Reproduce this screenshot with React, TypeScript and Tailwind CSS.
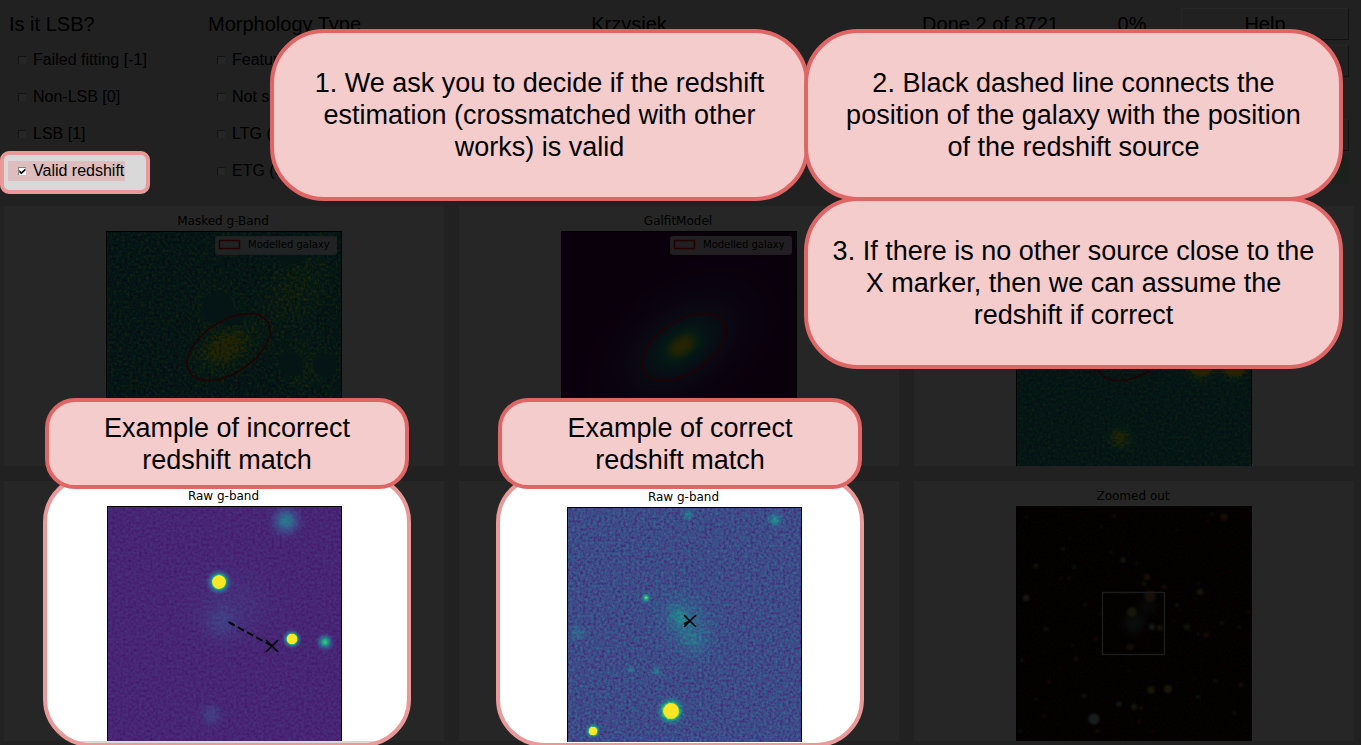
import type { ReactNode } from "react";

type Spot = { x: number; y: number; r: number; ry?: number; rot?: number; o?: number; star?: boolean };

const VIRIDIS_R = "0.267 0.283 0.254 0.207 0.164 0.128 0.135 0.267 0.478 0.741 0.993";
const VIRIDIS_G = "0.005 0.141 0.265 0.372 0.471 0.567 0.659 0.749 0.821 0.873 0.906";
const VIRIDIS_B = "0.329 0.458 0.530 0.553 0.558 0.551 0.518 0.441 0.318 0.150 0.144";

/* Greyscale intensity + sensor noise, mapped through the viridis colour scale. */
function SkyFilter({ id, noise, seed }: { id: string; noise: number; seed: number }) {
  return (
    <filter id={id} filterUnits="userSpaceOnUse" x="0" y="0" width="236" height="236" colorInterpolationFilters="sRGB">
      <feTurbulence type="fractalNoise" baseFrequency="0.37" numOctaves="2" seed={seed} result="t" />
      <feColorMatrix in="t" type="matrix" values="1 0 0 0 0  1 0 0 0 0  1 0 0 0 0  0 0 0 0 1" result="n" />
      <feComposite in="SourceGraphic" in2="n" operator="arithmetic" k1={0} k2={1} k3={noise} k4={-noise / 2} />
      <feComponentTransfer>
        <feFuncR type="table" tableValues={VIRIDIS_R} />
        <feFuncG type="table" tableValues={VIRIDIS_G} />
        <feFuncB type="table" tableValues={VIRIDIS_B} />
      </feComponentTransfer>
    </filter>
  );
}

function Sky({
  id,
  base,
  noise,
  seed,
  spots,
  wide,
  children,
}: {
  id: string;
  base: string;
  noise: number;
  seed: number;
  spots: Spot[];
  wide?: boolean;
  children?: ReactNode;
}) {
  const w = wide ? 236 : 235;
  return (
    <svg width={w} height="235" viewBox={`0 0 ${w} 235`} className="block shrink-0" aria-hidden="true">
      <defs>
        <SkyFilter id={`${id}-f`} noise={noise} seed={seed} />
        <radialGradient id={`${id}-soft`}>
          <stop offset="0" stopColor="#fff" />
          <stop offset="0.25" stopColor="#fff" stopOpacity="0.78" />
          <stop offset="0.5" stopColor="#fff" stopOpacity="0.36" />
          <stop offset="0.75" stopColor="#fff" stopOpacity="0.1" />
          <stop offset="1" stopColor="#fff" stopOpacity="0" />
        </radialGradient>
        <radialGradient id={`${id}-star`}>
          <stop offset="0.48" stopColor="#fff" />
          <stop offset="0.56" stopColor="#fff" stopOpacity="0.55" />
          <stop offset="0.7" stopColor="#fff" stopOpacity="0.2" />
          <stop offset="1" stopColor="#fff" stopOpacity="0" />
        </radialGradient>
      </defs>
      <g filter={`url(#${id}-f)`}>
        <rect width="236" height="236" fill={base} />
        {spots.map((s, i) => (
          <ellipse
            key={i}
            cx={s.x}
            cy={s.y}
            rx={s.r}
            ry={s.ry ?? s.r}
            opacity={s.o ?? 1}
            transform={`rotate(${s.rot ?? 0} ${s.x} ${s.y})`}
            fill={s.star ? `url(#${id}-star)` : `url(#${id}-soft)`}
          />
        ))}
      </g>
      {spots
        .filter((s) => s.star)
        .map((s) => (
          <ellipse
            key={`${s.x}-${s.y}`}
            cx={s.x}
            cy={s.y}
            rx={s.r * 0.5}
            ry={(s.ry ?? s.r) * 0.5}
            transform={`rotate(${s.rot ?? 0} ${s.x} ${s.y})`}
            fill="#fde725"
          />
        ))}
      {children}
      <rect x="0.5" y="0.5" width={w - 1} height="235" fill="none" stroke="#000" />
    </svg>
  );
}

function GalaxyOutline() {
  return <ellipse cx="122.5" cy="116" rx="46.5" ry="26" transform="rotate(-33 122.5 116)" fill="none" stroke="#f00000" strokeWidth="1.5" />;
}

function Legend() {
  return (
    <g>
      <rect x="109.5" y="5.5" width="121" height="18" rx="2" fill="#fff" fillOpacity="0.8" stroke="#ccc" />
      <rect x="113.5" y="9.500" width="20" height="8" fill="none" stroke="#f00000" strokeWidth="1.5" />
      <text x="142" y="17" fontSize="10" fontFamily="DejaVu Sans, sans-serif" fill="#000">
        Modelled galaxy
      </text>
    </g>
  );
}

function Cross({ x, y }: { x: number; y: number }) {
  return <path d={`M${x - 6} ${y - 6}L${x + 6} ${y + 6}M${x - 6} ${y + 6}L${x + 6} ${y - 6}`} stroke="#000" strokeWidth="1.6" />;
}

const FIELD: [number, number, number, string][] = [
  [10, 11, 2, "#8a5a2a"], [98, 10, 2.5, "#8a4a2a"], [85, 21, 2, "#7a3a2a"], [208, 11, 4.5, "#a0501e"], [196, 8, 2, "#6a7a80"],
  [192, 15, 2, "#803020"], [161, 24, 1.8, "#803030"], [54, 32, 2, "#702020"], [47, 43, 2.5, "#4a7068"], [20, 60, 3, "#8a7a50"],
  [58, 61, 2.5, "#3a7058"], [95, 46, 2, "#7a6040"], [107, 54, 3.5, "#7a8050"], [120, 57, 2, "#506040"], [45, 72, 2, "#8a5040"],
  [53, 72, 2, "#50705a"], [131, 71, 4, "#a06030"], [128, 78, 3, "#906030"], [148, 81, 3, "#a04020"], [183, 77, 2, "#904020"],
  [184, 86, 4, "#a08040"], [134, 90, 7, "#a07038"], [132, 100, 14, "#304a40"], [116, 106, 6, "#a09050"], [118, 117, 16, "#486058"],
  [136, 121, 4, "#80a0a0"], [144, 122, 3.5, "#909060"], [114, 141, 4.5, "#8a5038"], [10, 92, 4, "#809a98"], [69, 99, 2, "#706060"],
  [85, 107, 2, "#804020"], [161, 99, 2.5, "#807040"], [164, 104, 2, "#902020"], [233, 106, 2.5, "#a02020"], [171, 121, 4, "#6a7a30"],
  [158, 115, 2, "#902020"], [190, 129, 3.5, "#a04820"], [182, 128, 2, "#706020"], [206, 117, 2.5, "#6a8040"], [223, 121, 2.5, "#506050"],
  [30, 123, 2.5, "#608080"], [80, 133, 2.5, "#a03030"], [56, 139, 2, "#705030"], [60, 153, 3, "#804a30"], [6, 154, 2.5, "#507030"],
  [33, 176, 2.5, "#a03020"], [68, 190, 3, "#6a7a40"], [20, 193, 2, "#506040"], [135, 184, 4.5, "#a09840"], [152, 183, 5, "#b09848"],
  [182, 191, 2.5, "#20a070"], [199, 175, 2.5, "#607070"], [225, 179, 3, "#905038"], [103, 198, 3.5, "#6a90a0"], [118, 201, 3.5, "#a09050"],
  [125, 202, 2.5, "#905030"], [78, 213, 7, "#a8bcbc"], [28, 210, 2, "#507050"], [123, 216, 2.5, "#803838"], [218, 207, 2.5, "#706040"],
  [4, 225, 2.5, "#804a20"], [81, 225, 2.5, "#905020"], [137, 225, 2, "#803020"], [113, 165, 2, "#702828"], [178, 172, 2, "#603030"],
];

function ZoomedOut() {
  return (
    <svg width="236" height="235" viewBox="0 0 236 235" className="block shrink-0" aria-hidden="true">
      <defs>
        <filter id="grain" filterUnits="userSpaceOnUse" x="0" y="0" width="236" height="236" colorInterpolationFilters="sRGB">
          <feTurbulence type="fractalNoise" baseFrequency="0.5" numOctaves="2" seed="8" />
          <feColorMatrix type="matrix" values="0.5 0 0 0 -0.15  0 0.3 0 0 -0.12  0 0 0.3 0 -0.12  0 0 0 0 1" />
        </filter>
        <filter id="glow" filterUnits="userSpaceOnUse" x="0" y="0" width="236" height="236" colorInterpolationFilters="sRGB">
          <feGaussianBlur stdDeviation="0.9" />
        </filter>
        <filter id="haze" filterUnits="userSpaceOnUse" x="0" y="0" width="236" height="236" colorInterpolationFilters="sRGB">
          <feGaussianBlur stdDeviation="4" />
        </filter>
      </defs>
      <rect width="236" height="236" filter="url(#grain)" />
      <g filter="url(#haze)">
        {FIELD.filter((s) => s[2] > 10).map(([x, y, r, c]) => (
          <circle key={`${x}-${y}`} cx={x} cy={y} r={r * 0.6} fill={c} />
        ))}
      </g>
      <g filter="url(#glow)">
        {FIELD.filter((s) => s[2] <= 10).map(([x, y, r, c]) => (
          <circle key={`${x}-${y}`} cx={x} cy={y} r={r * 0.8} fill={c} />
        ))}
      </g>
      <rect x="86.5" y="86.5" width="62" height="62" fill="none" stroke="#b8b8b8" strokeWidth="1.4" />
      <rect x="0.5" y="0.5" width="235" height="235" fill="none" stroke="#000" />
    </svg>
  );
}

function Plot({ title, children }: { title: string; children: ReactNode }) {
  return (
    <>
      <h2 className="h-[25px] pr-[2px] font-['DejaVu_Sans',sans-serif] text-xs leading-[31px]">{title}</h2>
      {children}
    </>
  );
}

function Panel({ children }: { children?: ReactNode }) {
  return <section className="relative flex h-[260px] flex-col items-center bg-white">{children}</section>;
}

function Option({ label, checked }: { label: string; checked?: boolean }) {
  return (
    <label className="flex items-center gap-[7px] whitespace-nowrap text-base leading-5">
      <span className="relative block h-2 w-2 shrink-0">
        <input
          type="checkbox"
          defaultChecked={checked}
          className="peer block h-2 w-2 appearance-none border-l border-t border-[#828282] bg-white"
        />
        <svg viewBox="0 0 9 9" className="pointer-events-none absolute inset-0 hidden h-2 w-2 peer-checked:block" aria-hidden="true">
          <path d="M1.500 3.500v2.700l2.300 2L8.500 3.800V1.500L3.800 5.500z" fill="#000" />
        </svg>
      </span>
      {label}
    </label>
  );
}

function OptionRow({ label }: { label: string }) {
  return (
    <div className="flex h-[37px] items-center pl-[9px]">
      <Option label={label} />
    </div>
  );
}

const HEADING = "h-[37px] whitespace-nowrap text-xl leading-[40px]";

const BUTTON = "block h-8 w-full border border-b-[#828282] border-l-white border-r-[#828282] border-t-white text-center text-xl leading-none";

const CALLOUT =
  "absolute flex items-center justify-center border-4 border-[#e06666] bg-[#f4cccc] text-center text-[27px] leading-8 text-black";

export default function App() {
  return (
    <div className="min-h-screen bg-white pr-[2px] font-['Liberation_Sans',Arial,sans-serif] text-black">
      <div className="relative min-h-screen overflow-hidden bg-[#d9d9d9]">
        <header className="grid grid-cols-[199px_152px_1fr_185px_98px_168px] pb-[17px] pl-[9px] pr-3 pt-1">
          <fieldset>
            <legend className={HEADING}>Is it LSB?</legend>
            <OptionRow label="Failed fitting [-1]" />
            <OptionRow label="Non-LSB [0]" />
            <OptionRow label="LSB [1]" />
            <div className="relative z-20 h-[37px]">
              <div className="absolute -left-[9px] -top-px flex h-[43px] w-[150px] items-start rounded-[9px] border-4 border-[#ea9999] bg-[#d9d9d9] pt-[6px]">
                <div className="ml-1 bg-[#ddbdbd] pl-[10px] pr-px">
                  <Option label="Valid redshift" checked />
                </div>
              </div>
            </div>
          </fieldset>
          <fieldset>
            <legend className={HEADING}>Morphology Type</legend>
            <OptionRow label="Featureless" />
            <OptionRow label="Not sure" />
            <OptionRow label="LTG (Sp)" />
            <OptionRow label="ETG (S0)" />
          </fieldset>
          <p className={`${HEADING} text-center`}>Krzysiek</p>
          <p className={`${HEADING} text-center`}>Done 2 of 8721</p>
          <p className={`${HEADING} text-center`}>0%</p>
          <div className="flex flex-col gap-[5px] pt-1">
            <button className={BUTTON}>Help</button>
            <button className={BUTTON} aria-label="Fullscreen" />
            <div className="h-8" />
            <button className={BUTTON} aria-label="Return" />
            <button className="block h-7 w-full bg-[#b4d9b4]" aria-label="Save" />
          </div>
        </header>

        <main className="grid grid-cols-3 gap-[15px] pl-1 pr-[7px]">
          <Panel>
            <Plot title="Masked g-Band">
              <Sky
                id="masked"
                wide
                base="#828282"
                noise={1.1}
                seed={3}
                spots={[
                  { x: 120, y: 116, r: 58, ry: 36, rot: -30, o: 0.85 },
                  { x: 118, y: 117, r: 26, ry: 18, rot: -30, o: 0.9 },
                  { x: 190, y: 60, r: 80, ry: 50, rot: -50, o: 0.4 },
                  { x: 112, y: 75, r: 36, o: 0.4 },
                  { x: 200, y: 134, r: 50, o: 0.3 },
                ]}
              >
                <g fill="#21908c">
                  <circle cx="112" cy="76" r="16" />
                  <ellipse cx="124" cy="86" rx="14" ry="9" />
                  <ellipse cx="185" cy="26" rx="15" ry="7" />
                  <circle cx="185" cy="133" r="12" />
                  <circle cx="219" cy="134" r="12" />
                </g>
                <GalaxyOutline />
                <Legend />
              </Sky>
            </Plot>
          </Panel>
          <Panel>
            <Plot title="GalfitModel">
              <Sky
                id="model"
                wide
                base="#000"
                noise={0}
                seed={1}
                spots={[
                  { x: 121, y: 115, r: 130, ry: 80, rot: -34, o: 0.25 },
                  { x: 121, y: 115, r: 62, ry: 38, rot: -34, o: 0.65 },
                  { x: 121, y: 115, r: 26, ry: 17, rot: -34 },
                  { x: 121, y: 115, r: 20, ry: 13, rot: -34 },
                ]}
              >
                <GalaxyOutline />
                <Legend />
              </Sky>
            </Plot>
          </Panel>
          <Panel>
            <Plot title="g-band">
              <Sky
                id="gband"
                wide
                base="#868686"
                noise={0.8}
                seed={5}
                spots={[
                  { x: 120, y: 116, r: 46, ry: 28, rot: -34, o: 0.8 },
                  { x: 112, y: 75, r: 22, star: true },
                  { x: 185, y: 133, r: 23, star: true },
                  { x: 218, y: 134, r: 21, star: true },
                  { x: 104, y: 207, r: 19, o: 0.9 },
                ]}
              >
                <GalaxyOutline />
              </Sky>
            </Plot>
          </Panel>
          <Panel>
            <div className="absolute -top-[7px] left-[39px] right-[33px] z-20 flex h-[273px] flex-col items-center overflow-hidden rounded-[48px] border-4 border-[#ea9999] bg-white pt-[3px]">
              <div className="flex flex-col items-center pr-[5px]">
                <Plot title="Raw g-band">
                  <Sky
                    id="raw-a"
                    base="#1b1b1b"
                    noise={0.13}
                    seed={11}
                    spots={[
                      { x: 179, y: 15, r: 20, o: 0.34 },
                      { x: 125, y: 100, r: 70, ry: 60, o: 0.04 },
                      { x: 114, y: 117, r: 28, o: 0.07 },
                      { x: 112, y: 76, r: 13, star: true },
                      { x: 185, y: 133, r: 10, star: true },
                      { x: 218, y: 136, r: 10, o: 0.7 },
                      { x: 104, y: 209, r: 17, o: 0.1 },
                    ]}
                  >
                    <path d="M121.500 116L165 140" stroke="#000" strokeWidth="2" strokeDasharray="7 3.600" />
                    <Cross x={165} y={140} />
                  </Sky>
                </Plot>
              </div>
              <div className="w-full flex-1 bg-[#d9d9d9]" />
            </div>
          </Panel>
          <Panel>
            <div className="absolute -top-[7px] left-[37px] right-[35px] z-20 flex h-[273px] flex-col items-center overflow-hidden rounded-[48px] border-4 border-[#ea9999] bg-white pt-1">
              <div className="flex flex-col items-center pl-[9px]">
                <Plot title="Raw g-band">
                  <Sky
                    id="raw-b"
                    base="#3a3a3a"
                    noise={0.38}
                    seed={17}
                    spots={[
                      { x: 120, y: 118, r: 56, ry: 38, rot: 58, o: 0.15 },
                      { x: 113, y: 110, r: 20, ry: 14, rot: 50, o: 0.2 },
                      { x: 126, y: 134, r: 22, ry: 16, rot: 40, o: 0.08 },
                      { x: 208, y: 13, r: 10, o: 0.36 },
                      { x: 121, y: 8, r: 8, o: 0.28 },
                      { x: 79, y: 91, r: 6, o: 0.75 },
                      { x: 64, y: 163, r: 6, o: 0.24 },
                      { x: 90, y: 164, r: 8, o: 0.2 },
                      { x: 11, y: 126, r: 12, o: 0.16 },
                      { x: 104, y: 204, r: 15, star: true },
                      { x: 26, y: 224, r: 8, star: true },
                    ]}
                  >
                    <path d="M117 117L123 114" stroke="#000" strokeWidth="2" />
                    <Cross x={123} y={114} />
                  </Sky>
                </Plot>
              </div>
            </div>
          </Panel>
          <Panel>
            <Plot title="Zoomed out">
              <ZoomedOut />
            </Plot>
          </Panel>
        </main>

        <div className="pointer-events-none absolute inset-0 z-10 bg-black/85" />

        <aside className="absolute inset-x-0 top-0 z-30">
          <p className={`${CALLOUT} left-[270px] top-[29px] h-[172px] w-[539px] rounded-[54px]`}>
            1. We ask you to decide if the redshift
            <br />
            estimation (crossmatched with other
            <br />
            works) is valid
          </p>
          <p className={`${CALLOUT} right-[18px] top-[29px] h-[172px] w-[539px] rounded-[54px]`}>
            2. Black dashed line connects the
            <br />
            position of the galaxy with the position
            <br />
            of the redshift source
          </p>
          <p className={`${CALLOUT} right-[18px] top-[197px] h-[172px] w-[539px] rounded-[54px]`}>
            3. If there is no other source close to the
            <br />
            X marker, then we can assume the
            <br />
            redshift if correct
          </p>
          <p className={`${CALLOUT} left-[45px] top-[398px] h-[91px] w-[364px] rounded-[30px]`}>
            Example of incorrect
            <br />
            redshift match
          </p>
          <p className={`${CALLOUT} left-[498px] top-[398px] h-[91px] w-[364px] rounded-[30px]`}>
            Example of correct
            <br />
            redshift match
          </p>
        </aside>
      </div>
    </div>
  );
}
